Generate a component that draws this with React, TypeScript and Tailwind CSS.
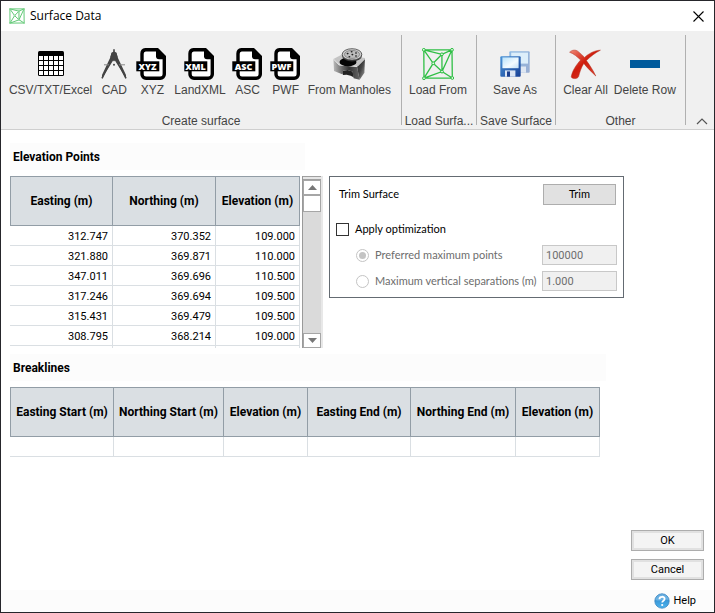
import { useState } from "react";
import type { ReactNode } from "react";

const points = [
  ["312.747", "370.352", "109.000"],
  ["321.880", "369.871", "110.000"],
  ["347.011", "369.696", "110.500"],
  ["317.246", "369.694", "109.500"],
  ["315.431", "369.479", "109.500"],
  ["308.795", "368.214", "109.000"],
  ["", "", ""],
];

const pointColumns = [
  { label: "Easting (m)", width: "w-[103px]" },
  { label: "Northing (m)", width: "w-[103px]" },
  { label: "Elevation (m)", width: "w-[84px]" },
];

const breaklineColumns = [
  { label: "Easting Start (m)", width: "w-[104px]" },
  { label: "Northing Start (m)", width: "w-[110px]" },
  { label: "Elevation (m)", width: "w-[84px]" },
  { label: "Easting End (m)", width: "w-[103px]" },
  { label: "Northing End (m)", width: "w-[105px]" },
  { label: "Elevation (m)", width: "w-[84px]" },
];

function TableIcon() {
  return (
    <svg width="32" height="32" viewBox="0 0 32 32">
      <rect x="3" y="3" width="26" height="25" rx="1.5" fill="#000" />
      {[8, 13, 18, 23].map((y) =>
        [4, 9, 14, 19, 24].map((x) => <rect key={`${x}-${y}`} x={x} y={y} width="4" height="4" fill="#fff" />)
      )}
    </svg>
  );
}

function CompassIcon() {
  return (
    <svg width="32" height="32" viewBox="0 0 32 32">
      <path d="M16 1.2v4" stroke="#444" strokeWidth="1.6" />
      <path d="M13.6 4.6 16 3.4l2.4 1.2 1.2 4.6L28 27v3.4L16 11 4 30.4V27l8.4-17.8z" fill="#444" />
      <path d="M12.2 9.2 16 13.4l3.8-4.2L18.4 5h-4.8z" fill="#444" />
      <path d="M18 10 28 30.4M14 10 4 30.4" stroke="#444" strokeWidth="1.6" />
      <path d="M6 16.8h5M21 16.8h6" stroke="#888" strokeWidth="1" />
      <circle cx="16" cy="16.8" r="1" fill="#444" />
    </svg>
  );
}

function FileIcon({ text }: { text: string }) {
  return (
    <svg width="32" height="32" viewBox="0 0 32 32">
      <path
        d="M9.5 1.8h11.8l7 7v17.4a4 4 0 0 1-4 4H10a4 4 0 0 1-4-4V5.8a4 4 0 0 1 3.5-4z"
        fill="#fff"
        stroke="#000"
        strokeWidth="3.4"
      />
      <path d="M20 1h2.5l7.3 7.6v2.6H23a3 3 0 0 1-3-3z" fill="#000" />
      <rect x="0.3" y="13.3" width="23" height="10" fill="#000" />
      <text
        x="11.5"
        y="21.6"
        textAnchor="middle"
        fontFamily="Open Sans, sans-serif"
        fontSize="9"
        fontWeight="800"
        fill="#fff"
      >
        {text}
      </text>
    </svg>
  );
}

function ManholeIcon() {
  return (
    <svg width="32" height="32" viewBox="0 0 32 32">
      <defs>
        <linearGradient id="manhole-front" x1="0" x2="1" y1="0" y2="0">
          <stop offset="0" stopColor="#bbb" />
          <stop offset="0.35" stopColor="#666" />
          <stop offset="0.6" stopColor="#333" />
          <stop offset="1" stopColor="#666" />
        </linearGradient>
        <linearGradient id="manhole-side" x1="0" x2="1" y1="0" y2="1">
          <stop offset="0" stopColor="#222" />
          <stop offset="0.5" stopColor="#444" />
          <stop offset="1" stopColor="#aaa" />
        </linearGradient>
      </defs>
      <path d="M.4 11 9 6.5 32 10l-6 8-19-1z" fill="#c4c4c4" />
      <path d="M.4 11 6 17l18 1.6 2.6 13.2-6-1.6-1-6.6-5-1.6-4.4.6-.4 3.8L1 23z" fill="url(#manhole-front)" />
      <path d="M24 18.6 32 10.5l-.6 14.3-4.8 7z" fill="url(#manhole-side)" />
      <path d="M10 22.8l4.6-.8 5 1.6 1 5.600-3-1.400-4-1-3.600.200z" fill="#222" />
      <path d="M.4 11 6 17l18 1.6 8-8" fill="none" stroke="#ddd" strokeWidth="1" />
      <ellipse cx="15" cy="14" rx="8.5" ry="4.4" fill="#050505" />
      <ellipse cx="19" cy="7.6" rx="10" ry="6" fill="#333" />
      <ellipse cx="19" cy="6.4" rx="9.8" ry="5.7" fill="#cfcfcf" stroke="#444" strokeWidth="0.8" />
      <ellipse cx="19" cy="6.4" rx="7.6" ry="4" fill="#bdbdbd" stroke="#666" strokeWidth="0.6" />
      <g fill="#222">
        <ellipse cx="14.6" cy="5.6" rx="1" ry="0.8" />
        <ellipse cx="18.6" cy="3.8" rx="1" ry="0.8" />
        <ellipse cx="23" cy="5" rx="1" ry="0.8" />
        <ellipse cx="23" cy="8" rx="1" ry="0.8" />
        <ellipse cx="16.4" cy="8.8" rx="1" ry="0.8" />
        <ellipse cx="19.4" cy="6.6" rx="1" ry="0.8" />
      </g>
    </svg>
  );
}

function SurfaceIcon({ size, color }: { size: number; color: string }) {
  const nodes = [
    [1.8, 1.8],
    [30, 1.8],
    [19.9, 6.3],
    [11.2, 15.3],
    [20, 23.6],
    [2, 30.2],
    [30.3, 30],
  ];
  return (
    <svg width={size} height={size} viewBox="0 0 32 32">
      <path
        d="M1.8 1.8H30L30.3 30 2 30.2zM1.8 1.8l18.1 4.5L30 1.8M1.8 1.8 11.2 15.3 19.9 6.3M2 30.2l9.2-14.9L20 23.6zM30.3 30 20 23.6 30 1.8M19.9 6.3 20 23.6"
        fill="none"
        stroke={color}
        strokeWidth={size < 20 ? 2 : 1.3}
      />
      {nodes.map(([x, y]) => (
        <circle key={`${x}-${y}`} cx={x} cy={y} r="1.4" fill="#e4f5e6" stroke={color} strokeWidth="1" />
      ))}
    </svg>
  );
}

function SaveIcon() {
  return (
    <svg width="32" height="32" viewBox="0 0 32 32">
      <defs>
        <linearGradient id="floppy" x1="0" x2="1" y1="0" y2="1">
          <stop offset="0" stopColor="#4a94d8" />
          <stop offset="1" stopColor="#173f94" />
        </linearGradient>
        <linearGradient id="floppy-back" x1="0" x2="1" y1="0" y2="1">
          <stop offset="0" stopColor="#8fbbe4" />
          <stop offset="1" stopColor="#9aaed2" />
        </linearGradient>
        <linearGradient id="floppy-label" x1="0" x2="1" y1="0" y2="1">
          <stop offset="0" stopColor="#b9e2fa" />
          <stop offset="0.6" stopColor="#f4fbff" />
          <stop offset="1" stopColor="#c3e0f6" />
        </linearGradient>
      </defs>
      <rect x="10.3" y="3.3" width="20.4" height="21.4" rx="1" fill="url(#floppy-back)" />
      <rect x="12.2" y="4.6" width="16.8" height="11" fill="#dceefa" />
      <rect x="20" y="18.5" width="7" height="6.2" fill="#dfe7f2" />
      <rect x="1.3" y="8.3" width="20.4" height="20.4" rx="1" fill="url(#floppy)" />
      <rect x="3.4" y="9.4" width="16.2" height="10.8" fill="url(#floppy-label)" />
      <rect x="6" y="22.4" width="10.4" height="6.3" fill="#dbe5f4" />
      <rect x="8" y="23.4" width="3" height="5.3" fill="#1c3f8e" />
    </svg>
  );
}

function ClearIcon() {
  return (
    <svg width="32" height="32" viewBox="0 0 32 32">
      <defs>
        <linearGradient id="cross" x1="0" x2="1" y1="0" y2="1">
          <stop offset="0" stopColor="#f08a78" />
          <stop offset="0.45" stopColor="#cf1c0c" />
          <stop offset="1" stopColor="#dd4a38" />
        </linearGradient>
      </defs>
      <path
        d="M.6 4.2C3 1.600 7 1.600 9 3.400c2.400 2 4.600 4 6.600 6C19.600 5.800 25 2.400 31.400 2.200 26.600 4.600 21.600 8.400 17.400 12.600c3.400 4.600 6.800 10 9.400 15.400C22.600 24 18 19.600 14.800 15.400c-2.600 4-4.200 9-5.200 13.200-1.200 2.600-6 2.600-7.400.4C3 23.400 6.800 17.400 11.600 12 8.400 9 5 5.800.6 4.2z"
        fill="url(#cross)"
        stroke="#b3301f"
        strokeWidth="0.5"
      />
    </svg>
  );
}

function MinusIcon() {
  return (
    <svg width="32" height="32" viewBox="0 0 32 32">
      <rect x="1" y="12" width="30" height="8" fill="#005a9c" />
    </svg>
  );
}

function HelpIcon() {
  return (
    <svg width="16" height="16" viewBox="0 0 16 16">
      <defs>
        <linearGradient id="help" x1="0" x2="0" y1="0" y2="1">
          <stop offset="0" stopColor="#2b7fc4" />
          <stop offset="1" stopColor="#4cb4ee" />
        </linearGradient>
      </defs>
      <circle cx="8" cy="8" r="7.2" fill="url(#help)" stroke="#3b87c0" strokeWidth="0.8" />
      <path d="M1.6 7a6.4 6 0 0 1 12.8 0C11 5 6 9 1.6 7z" fill="#8cc8ee" opacity="0.6" />
      <path d="M5.4 6.2C5.4 3 10.6 3 10.6 6c0 1.8-2.4 1.8-2.4 3.6" fill="none" stroke="#fff" strokeWidth="1.8" />
      <circle cx="8.2" cy="12" r="1.1" fill="#fff" />
    </svg>
  );
}

function RibbonButton({ label, children }: { label: string; children: ReactNode }) {
  return (
    <button className="flex shrink-0 flex-col items-center px-[3px] whitespace-nowrap hover:bg-gray-200">
      {children}
      <span className="leading-5">{label}</span>
    </button>
  );
}

function RibbonGroup({ title, width, children }: { title: string; width: string; children: ReactNode }) {
  return (
    <section className={`flex shrink-0 flex-col justify-between border-r border-[#b0b0b0] ${width}`}>
      <div className="flex justify-center pt-[13px] pr-0.5">{children}</div>
      <h2 className="-mb-1 text-center leading-4 whitespace-nowrap">{title}</h2>
    </section>
  );
}

function HeaderRow({ columns }: { columns: { label: string; width: string }[] }) {
  return (
    <thead>
      <tr>
        {columns.map((col, i) => (
          <th
            key={i}
            className={`h-[50px] border-y border-r border-[#929da6] bg-[#dadfe3] p-0 text-xs font-bold whitespace-nowrap first:border-l ${col.width}`}
          >
            {col.label}
          </th>
        ))}
      </tr>
    </thead>
  );
}

export default function App() {
  const [optimize, setOptimize] = useState(false);
  const [mode, setMode] = useState("points");
  const [maxPoints, setMaxPoints] = useState("100000");
  const [separation, setSeparation] = useState("1.000");

  const headingClass = "mb-1.5 h-[27px] bg-[#fcfcfc] px-[3px] text-xs leading-[29px] font-bold";
  const radioClass =
    "size-[13px] appearance-none rounded-full border border-[#c4c4c4] bg-white p-[2px] before:block before:size-[7px] before:rounded-full checked:before:bg-[#c4c4c4]";
  const fieldClass =
    "h-5 w-[75px] shrink-0 border border-[#c8c8c8] bg-white px-[3px] font-['Roboto',sans-serif] disabled:bg-[#f0f0f0] disabled:text-[#6d6d6d]";
  const buttonClass = "h-[21px] w-[73px] border border-[#adadad] pt-0.5 outline-2 -outline-offset-3 outline-[#e1e1e1] bg-[#f4f4f4]";

  return (
    <div className="flex min-h-screen w-full flex-col border border-[#26262b] bg-white font-['Roboto',sans-serif] text-[11px] text-black">
      {/* Title bar */}
      <header className="flex h-[30px] items-center px-2">
        <SurfaceIcon size={16} color="#62c977" />
        <h1 className="ml-[5px] font-['Open_Sans',sans-serif] text-xs">Surface Data</h1>
        <button aria-label="Close" className="ml-auto p-0.5">
          <svg width="11" height="11" viewBox="0 0 11 11">
            <path d="M.5.5l10 10M10.5.5l-10 10" stroke="#000" strokeWidth="1.1" />
          </svg>
        </button>
      </header>

      {/* Ribbon */}
      <nav className="flex h-[99px] border-b border-[#cfcfcf] bg-[#f0f0f0] pt-1 pb-1 font-['Liberation_Sans',sans-serif] text-xs text-[#444]">
        <RibbonGroup title="Create surface" width="w-[401px]">
          <RibbonButton label="CSV/TXT/Excel"><TableIcon /></RibbonButton>
          <RibbonButton label="CAD"><CompassIcon /></RibbonButton>
          <RibbonButton label="XYZ"><FileIcon text="XYZ" /></RibbonButton>
          <RibbonButton label="LandXML"><FileIcon text="XML" /></RibbonButton>
          <RibbonButton label="ASC"><FileIcon text="ASC" /></RibbonButton>
          <RibbonButton label="PWF"><FileIcon text="PWF" /></RibbonButton>
          <RibbonButton label="From Manholes"><ManholeIcon /></RibbonButton>
        </RibbonGroup>
        <RibbonGroup title="Load Surfa..." width="w-[75px]">
          <RibbonButton label="Load From"><SurfaceIcon size={32} color="#2fbf45" /></RibbonButton>
        </RibbonGroup>
        <RibbonGroup title="Save Surface" width="w-[79px]">
          <RibbonButton label="Save As"><SaveIcon /></RibbonButton>
        </RibbonGroup>
        <RibbonGroup title="Other" width="w-[130px]">
          <RibbonButton label="Clear All"><ClearIcon /></RibbonButton>
          <RibbonButton label="Delete Row"><MinusIcon /></RibbonButton>
        </RibbonGroup>
        <button aria-label="Collapse ribbon" className="mr-1.5 ml-auto self-end">
          <svg width="12" height="7" viewBox="0 0 12 7">
            <path d="M1 6l5-5 5 5" fill="none" stroke="#555" strokeWidth="1.2" />
          </svg>
        </button>
      </nav>

      <main className="flex grow flex-col px-[9px] pt-[13px]">
        <div className="flex items-end">
          <section className="w-[313px] shrink-0">
            <h2 className={`w-[295px] ${headingClass}`}>Elevation Points</h2>
            <div className="flex h-[172px] gap-0.5 overflow-hidden">
              <div className="w-[290px] shrink-0 overflow-hidden">
                <table className="w-full table-fixed border-separate border-spacing-0">
                  <HeaderRow columns={pointColumns} />
                  <tbody>
                    {points.map((row, i) => (
                      <tr key={i}>
                        {row.map((value, j) => (
                          <td key={j} className="h-5 border-r border-b border-[#dadfe3] pt-0.5 pr-1 pb-0 text-right leading-4">
                            {value}
                          </td>
                        ))}
                      </tr>
                    ))}
                  </tbody>
                </table>
              </div>
              {/* Scroll bar */}
              <div className="flex w-[21px] flex-col border-r-2 border-l border-r-[#e8e8e8] border-l-[#999] bg-[#dadada]">
                <div className="h-1 border-y border-[#a0a0a0] bg-[#e6e6e6]" />
                <button aria-label="Scroll up" className="flex h-[15px] items-center justify-center border border-[#a6a6a6] bg-white">
                  <svg width="9" height="5" viewBox="0 0 9 5"><path d="M0 5 4.500 0 9 5z" fill="#777" /></svg>
                </button>
                <div className="h-[17px] border border-[#a6a6a6] bg-white" />
                <button aria-label="Scroll down" className="mt-auto flex h-[15px] items-center justify-center border border-[#a6a6a6] bg-white">
                  <svg width="9" height="5" viewBox="0 0 9 5"><path d="M0 0h9L4.500 5z" fill="#777" /></svg>
                </button>
              </div>
            </div>
          </section>

          {/* Trim and optimization */}
          <section className="mb-[50px] ml-1.5 flex h-[122px] w-[295px] shrink-0 flex-col border border-[#646b72] px-1.5 pt-[7px] font-['Lato',sans-serif]">
            <div className="flex items-center justify-between pr-px pl-[3px]">
              <h2>Trim Surface</h2>
              <button className="h-[21px] w-[73px] border border-[#adadad] bg-[#e1e1e1]">Trim</button>
            </div>
            <label className="mt-[15px] flex h-[18px] items-center gap-1.5">
              <input
                type="checkbox"
                checked={optimize}
                onChange={(e) => setOptimize(e.target.checked)}
                className="size-[13px] appearance-none border border-[#333] bg-white checked:bg-[#333]"
              />
              Apply optimization
            </label>
            <div className="mt-[7px] flex items-center justify-between pl-5 text-[#6d6d6d]">
              <label className="flex items-center gap-1.5">
                <input type="radio" name="mode" disabled={!optimize} checked={mode === "points"} onChange={() => setMode("points")} className={radioClass} />
                Preferred maximum points
              </label>
              <input
                type="text"
                aria-label="Preferred maximum points"
                disabled={!optimize}
                value={maxPoints}
                onChange={(e) => setMaxPoints(e.target.value)}
                className={fieldClass}
              />
            </div>
            <div className="mt-1.5 flex items-center justify-between pl-5 text-[#6d6d6d]">
              <label className="flex items-center gap-1.5 whitespace-nowrap">
                <input type="radio" name="mode" disabled={!optimize} checked={mode === "separation"} onChange={() => setMode("separation")} className={radioClass} />
                Maximum vertical separations (m)
              </label>
              <input
                type="text"
                aria-label="Maximum vertical separations (m)"
                disabled={!optimize}
                value={separation}
                onChange={(e) => setSeparation(e.target.value)}
                className={fieldClass}
              />
            </div>
          </section>
        </div>

        <section className="mt-1.5">
          <h2 className={`w-[596px] ${headingClass}`}>Breaklines</h2>
          <table className="w-[590px] table-fixed border-separate border-spacing-0">
            <HeaderRow columns={breaklineColumns} />
            <tbody>
              <tr>
                {breaklineColumns.map((_, i) => (
                  <td key={i} className="h-5 border-r border-b border-[#dadfe3] p-0" />
                ))}
              </tr>
            </tbody>
          </table>
        </section>

        <div className="mt-auto mr-px mb-2.5 flex flex-col items-end gap-2">
          <button className={buttonClass}>OK</button>
          <button className={buttonClass}>Cancel</button>
        </div>
      </main>

      <footer className="flex h-[22px] items-center justify-end bg-[#fcfcfc] pr-[18px]">
        <a href="#help" className="flex items-center gap-[3px]">
          <HelpIcon />
          Help
        </a>
      </footer>
    </div>
  );
}
